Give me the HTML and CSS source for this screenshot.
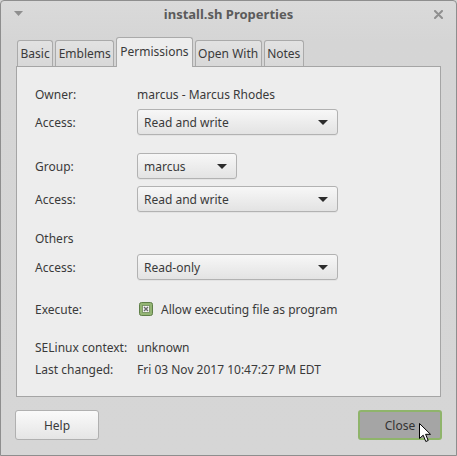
FILE: index.html
```html
<!DOCTYPE html>
<html>
<head>
<meta charset="utf-8">
<link rel="stylesheet" href="styles.css">
</head>
<body>
<div class="window">
  <div class="titlebar">
    <svg class="menu-arrow" width="9" height="5" viewBox="0 0 9 5"><path d="M0 0H9L4.5 5Z" fill="#8f8f8f"/></svg>
    <span class="title">install.sh Properties</span>
    <svg class="close-x" width="9" height="9" viewBox="0 0 9 9"><path d="M1 1L8 8M8 1L1 8" stroke="#8f8f8f" stroke-width="2" stroke-linecap="round"/></svg>
  </div>
  <div class="tabs">
    <div class="tab">Basic</div>
    <div class="tab">Emblems</div>
    <div class="tab active">Permissions</div>
    <div class="tab">Open With</div>
    <div class="tab">Notes</div>
  </div>
  <div class="panel">
    <div class="row text-row s-owner"><span class="label">Owner:</span><span>marcus - Marcus Rhodes</span></div>
    <div class="row combo-row s-a1"><span class="label">Access:</span><div class="combo wide"><span>Read and write</span><i class="arrow"></i></div></div>
    <div class="row combo-row s-group"><span class="label">Group:</span><div class="combo narrow"><span>marcus</span><i class="arrow"></i></div></div>
    <div class="row combo-row s-a2"><span class="label">Access:</span><div class="combo wide"><span>Read and write</span><i class="arrow"></i></div></div>
    <div class="row text-row s-others"><span class="label">Others</span></div>
    <div class="row combo-row s-a3"><span class="label">Access:</span><div class="combo wide"><span>Read-only</span><i class="arrow"></i></div></div>
    <div class="row text-row s-exec"><span class="label">Execute:</span>
      <span class="check">
        <svg width="14" height="14" viewBox="0 0 14 14"><rect x="0.5" y="0.5" width="13" height="13" rx="2" fill="#94b574" stroke="#5f7f48"/><rect x="3.5" y="3.5" width="7" height="7" fill="#f4f4f4" stroke="#6f8a5a" stroke-width="0.8"/><path d="M5 5L9 9M9 5L5 9" stroke="#6b6b6b" stroke-width="1.4"/></svg>
        <span class="check-label">Allow executing file as program</span>
      </span>
    </div>
    <div class="row text-row s-selinux"><span class="label">SELinux context:</span><span>unknown</span></div>
    <div class="row text-row s-last"><span class="label">Last changed:</span><span>Fri 03 Nov 2017 10:47:27 PM EDT</span></div>
  </div>
  <div class="actions">
    <button class="btn">Help</button>
    <button class="btn btn-default">Close</button>
  </div>
  <svg class="cursor" width="13" height="20" viewBox="0 0 13 20"><path d="M0.5 0.5V15.5L4.2 12.2L6.8 18.5L9.2 17.5L6.6 11.3H11.5Z" fill="#ffffff" stroke="#000000" stroke-width="1" stroke-linejoin="round"/></svg>
</div>
</body>
</html>
```
FILE: styles.css
```css
* { box-sizing: border-box; }
html, body {
  margin: 0;
  padding: 0;
  width: 457px;
  height: 456px;
  overflow: hidden;
  background: #d6d6d6;
}
body {
  font-family: "Noto Sans", "DejaVu Sans", sans-serif;
  font-size: 12px;
  color: #3a3a3a;
}
.window {
  position: relative;
  width: 457px;
  height: 456px;
  border: 1px solid #8e8e8e;
  border-radius: 4px 4px 0 0;
  background: linear-gradient(#dadada, #d5d5d5 40px, #d6d6d6);
  display: flex;
  flex-direction: column;
}
.titlebar {
  height: 28px;
  display: flex;
  align-items: center;
  padding: 0 13px;
  position: relative;
}
.menu-arrow { margin-top: -4px; }
.title {
  flex: 1;
  text-align: center;
  font-weight: bold;
  font-size: 13px;
  color: #5b5b5b;
  margin-top: -2px;
}
.close-x { margin-top: -2px; }
.tabs {
  display: flex;
  align-items: flex-end;
  gap: 2px;
  margin-top: 8px;
  padding-left: 16px;
  height: 29px;
  position: relative;
  z-index: 2;
}
.tab {
  height: 26px;
  padding: 0 2.5px;
  border: 1px solid #aaaaaa;
  border-bottom: none;
  border-radius: 3px 3px 0 0;
  background: linear-gradient(#e2e2e2, #d8d8d8);
  line-height: 25px;
  color: #3a3a3a;
}
.tab.active {
  height: 30px;
  margin-bottom: -1px;
  padding: 0 3px;
  background: #ededed;
  line-height: 28px;
}
.panel {
  margin: 0 15px;
  height: 331px;
  border: 1px solid #a5a5a5;
  background: #ededed;
  padding: 0 18px;
  position: relative;
  z-index: 1;
}
.row {
  display: flex;
  align-items: center;
}
.text-row { height: 22px; }
.combo-row { height: 26px; }
.label {
  width: 102px;
  flex-shrink: 0;
}
.s-owner { margin-top: 16px; }
.s-a1 { margin-top: 4px; }
.s-group { margin-top: 18px; }
.s-a2 { margin-top: 7px; }
.s-others { margin-top: 15px; }
.s-a3 { margin-top: 5px; }
.s-exec { margin-top: 18px; }
.s-selinux { margin-top: 16px; }
.s-last { margin-top: 0; }
.combo {
  height: 26px;
  display: flex;
  align-items: center;
  justify-content: space-between;
  padding: 0 9px 0 6px;
  border: 1px solid #b2b2b2;
  border-radius: 3px;
  background: linear-gradient(#f7f7f7, #e3e3e3);
  box-shadow: 0 1px 0 rgba(0,0,0,0.04);
}
.combo.wide { width: 201px; }
.combo.narrow { width: 100px; }
.arrow {
  width: 0;
  height: 0;
  border-left: 5px solid transparent;
  border-right: 5px solid transparent;
  border-top: 5px solid #2c2c2c;
}
.check {
  display: flex;
  align-items: center;
  margin-left: 2px;
}
.check svg { display: block; }
.check-label { margin-left: 8px; }
.actions {
  display: flex;
  justify-content: space-between;
  margin-top: 13px;
  padding: 0 14px;
}
.btn {
  width: 84px;
  height: 30px;
  font-family: "Noto Sans", "DejaVu Sans", sans-serif;
  font-size: 12px;
  color: #3a3a3a;
  border: 1px solid #b0b0b0;
  border-radius: 3px;
  background: linear-gradient(#fafafa, #e5e5e5);
  padding: 0;
}
.btn-default {
  border: 2px solid #8fb46b;
  background: #a5a5a5;
  color: #333333;
}
.cursor {
  position: absolute;
  left: 418px;
  top: 422px;
}
```
